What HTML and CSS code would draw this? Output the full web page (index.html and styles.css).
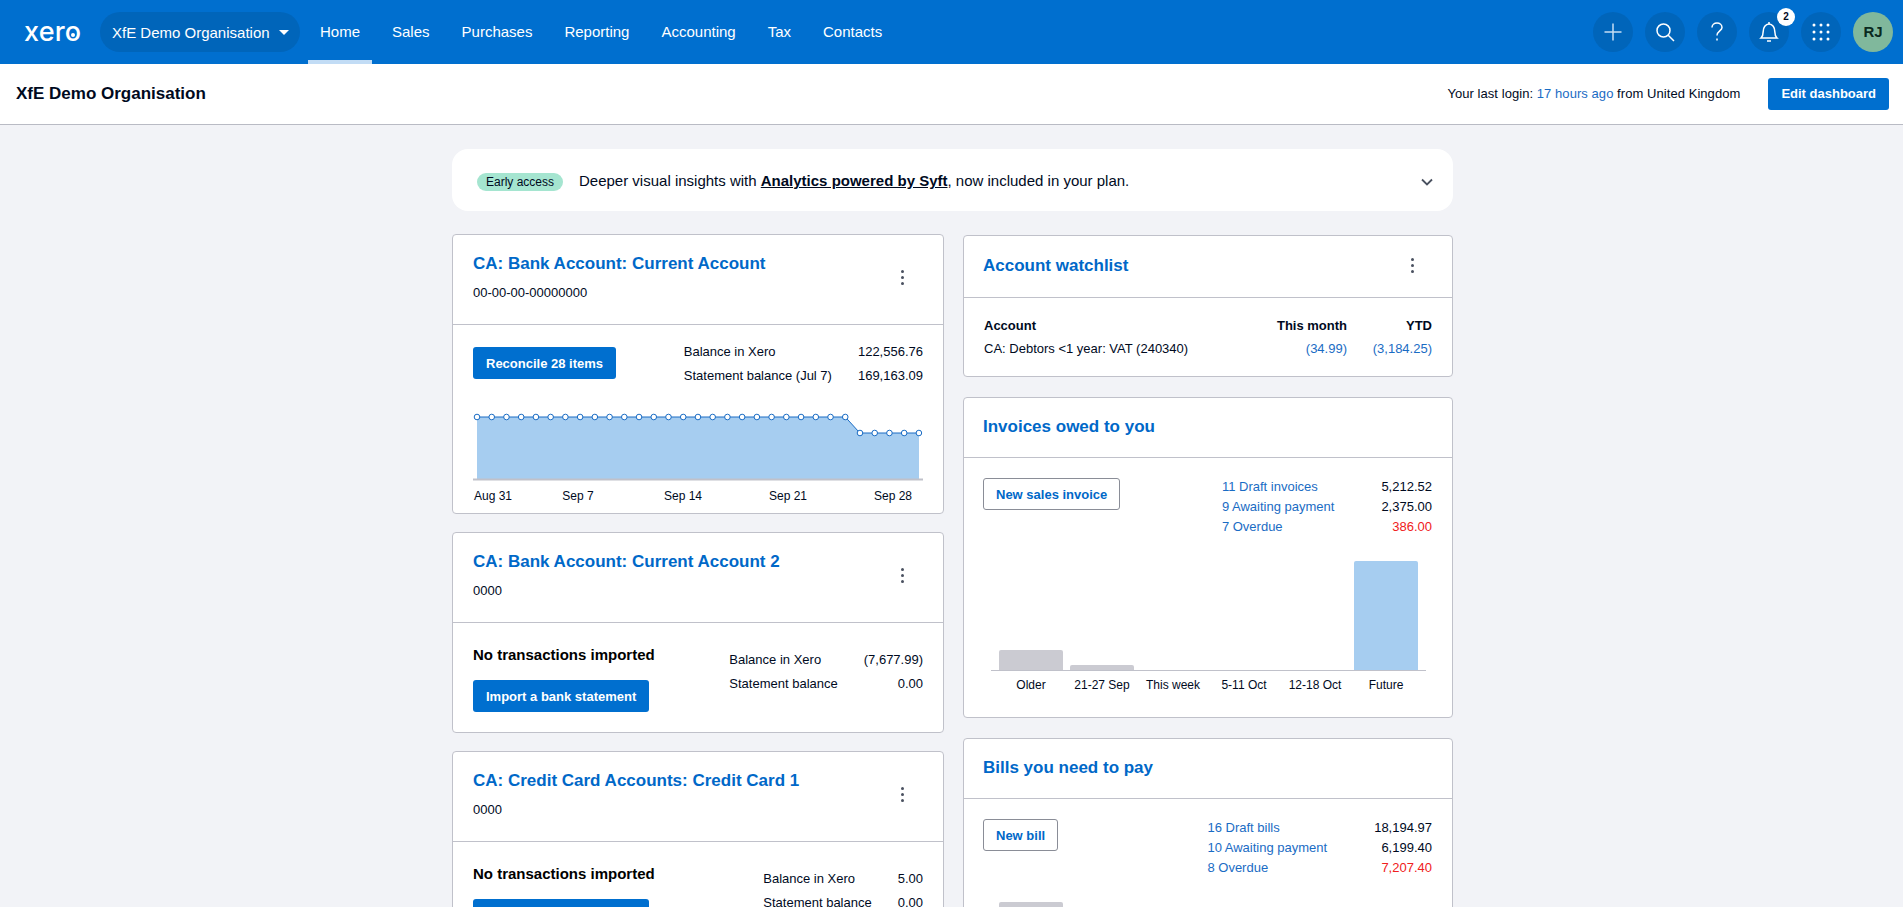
FILE: index.html
```html
<!DOCTYPE html>
<html lang="en">
<head>
<meta charset="utf-8">
<title>Xero Dashboard</title>
<link rel="stylesheet" href="styles.css">
</head>
<body>
<header class="topbar">
  <div class="brand"><a class="logo">xero</a></div>
  <button class="org">XfE Demo Organisation<span class="caret"></span></button>
  <nav class="nav">
    <a class="nav-item active">Home</a>
    <a class="nav-item">Sales</a>
    <a class="nav-item">Purchases</a>
    <a class="nav-item">Reporting</a>
    <a class="nav-item">Accounting</a>
    <a class="nav-item">Tax</a>
    <a class="nav-item">Contacts</a>
  </nav>
  <div class="tools">
    <span class="tool"><svg width="20" height="20" viewBox="0 0 20 20"><path class="plus" d="M10 1.500v17M1.500 10h17"/></svg></span>
    <span class="tool"><svg width="22" height="22" viewBox="0 0 22 22"><circle class="ln" cx="9.500" cy="9.500" r="6.500"/><path class="ln" d="M14.200 14.200l5.800 5.800"/></svg></span>
    <span class="tool"><svg width="14" height="22" viewBox="0 0 14 22"><path class="ln" d="M2 6.500C2 3.800 4.200 2 7 2s5 1.800 5 4.400c0 3.400-5 3.800-5 8.100M7 17.500v2"/></svg></span>
    <span class="tool"><svg width="20" height="22" viewBox="0 0 20 22"><path class="ln" d="M2 17h16c-1.600-1.500-2.200-3-2.200-6.500C15.800 6.500 13.500 3 10 3S4.200 6.500 4.200 10.500C4.200 14 3.600 15.500 2 17z"/><path class="ln" d="M10 1v2M8 20h4"/></svg><span class="badge">2</span></span>
    <span class="tool"><svg width="18" height="18" viewBox="0 0 18 18"><g class="dots"><circle cx="2" cy="2" r="1.500"/><circle cx="9" cy="2" r="1.500"/><circle cx="16" cy="2" r="1.500"/><circle cx="2" cy="9" r="1.500"/><circle cx="9" cy="9" r="1.500"/><circle cx="16" cy="9" r="1.500"/><circle cx="2" cy="16" r="1.500"/><circle cx="9" cy="16" r="1.500"/><circle cx="16" cy="16" r="1.500"/></g></svg></span>
    <span class="avatar">RJ</span>
  </div>
</header>
<div class="subbar">
  <h1 class="page-title">XfE Demo Organisation</h1>
  <div class="sub-right">
    <span class="login">Your last login: <a class="link">17 hours ago</a> from United Kingdom</span>
    <button class="btn primary">Edit dashboard</button>
  </div>
</div>
<main class="main">
  <section class="banner">
    <span class="pill">Early access</span>
    <span class="banner-text">Deeper visual insights with <a class="banner-link">Analytics powered by Syft</a>, now included in your plan.</span>
    <svg class="chev" width="12" height="8" viewBox="0 0 12 8"><path d="M1 1.500l5 5 5-5"/></svg>
  </section>
  <div class="cols">
    <div class="col">
      <article class="card">
        <div class="card-head">
          <div><h2 class="card-title">CA: Bank Account: Current Account</h2><div class="acct">00-00-00-00000000</div></div>
          <span class="kebab"><i></i><i></i><i></i></span>
        </div>
        <div class="bank-body chart-body">
          <div class="bank-row">
            <button class="btn primary top7">Reconcile 28 items</button>
            <div class="stats">
              <span>Balance in Xero</span><span class="num">122,556.76</span>
              <span>Statement balance (Jul 7)</span><span class="num">169,163.09</span>
            </div>
          </div>
          <svg class="line-chart" width="450" height="113" viewBox="0 0 450 113">
            <path class="area" d="M4 17H372.300L386.900 33H446V79H4z"/>
            <path class="axis" d="M0 79.500H450"/>
            <path class="trend" d="M4 17H372.300L386.900 33H446"/>
            <g class="pts" id="pts"></g>
            <text class="tick" x="1" y="100">Aug 31</text>
            <text class="tick mid" x="105" y="100">Sep 7</text>
            <text class="tick mid" x="210" y="100">Sep 14</text>
            <text class="tick mid" x="315" y="100">Sep 21</text>
            <text class="tick mid" x="420" y="100">Sep 28</text>
          </svg>
        </div>
      </article>
      <article class="card">
        <div class="card-head">
          <div><h2 class="card-title">CA: Bank Account: Current Account 2</h2><div class="acct">0000</div></div>
          <span class="kebab"><i></i><i></i><i></i></span>
        </div>
        <div class="bank-body">
          <div class="bank-row">
            <div><div class="none">No transactions imported</div><button class="btn primary top15">Import a bank statement</button></div>
            <div class="stats top3">
              <span>Balance in Xero</span><span class="num">(7,677.99)</span>
              <span>Statement balance</span><span class="num">0.00</span>
            </div>
          </div>
        </div>
      </article>
      <article class="card">
        <div class="card-head">
          <div><h2 class="card-title">CA: Credit Card Accounts: Credit Card 1</h2><div class="acct">0000</div></div>
          <span class="kebab"><i></i><i></i><i></i></span>
        </div>
        <div class="bank-body">
          <div class="bank-row">
            <div><div class="none">No transactions imported</div><button class="btn primary top15">Import a bank statement</button></div>
            <div class="stats top3">
              <span>Balance in Xero</span><span class="num">5.00</span>
              <span>Statement balance</span><span class="num">0.00</span>
            </div>
          </div>
        </div>
      </article>
    </div>
    <div class="col col-right">
      <article class="card">
        <div class="single-head watch-head">
          <h2 class="card-title">Account watchlist</h2>
          <span class="kebab"><i></i><i></i><i></i></span>
        </div>
        <div class="watch-body">
          <div class="watch">
            <b>Account</b><b class="num">This month</b><b class="num">YTD</b>
            <span>CA: Debtors &lt;1 year: VAT (240340)</span><a class="num link">(34.99)</a><a class="num link">(3,184.25)</a>
          </div>
        </div>
      </article>
      <article class="card">
        <div class="single-head"><h2 class="card-title">Invoices owed to you</h2></div>
        <div class="money-body">
          <div class="bank-row">
            <button class="btn outline">New sales invoice</button>
            <div class="money">
              <a class="link">11 Draft invoices</a><span class="num">5,212.52</span>
              <a class="link">9 Awaiting payment</a><span class="num">2,375.00</span>
              <a class="link">7 Overdue</a><span class="num red">386.00</span>
            </div>
          </div>
          <div class="plot">
            <span class="bar grey" style="height:20px"></span>
            <span class="bar grey" style="height:5px"></span>
            <span class="bar" style="height:0"></span>
            <span class="bar" style="height:0"></span>
            <span class="bar" style="height:0"></span>
            <span class="bar blue" style="height:109px"></span>
          </div>
          <div class="plot-labels"><span>Older</span><span>21-27 Sep</span><span>This week</span><span>5-11 Oct</span><span>12-18 Oct</span><span>Future</span></div>
        </div>
      </article>
      <article class="card">
        <div class="single-head"><h2 class="card-title">Bills you need to pay</h2></div>
        <div class="money-body">
          <div class="bank-row">
            <button class="btn outline">New bill</button>
            <div class="money">
              <a class="link">16 Draft bills</a><span class="num">18,194.97</span>
              <a class="link">10 Awaiting payment</a><span class="num">6,199.40</span>
              <a class="link">8 Overdue</a><span class="num red">7,207.40</span>
            </div>
          </div>
          <div class="plot">
            <span class="bar grey" style="height:109px"></span>
            <span class="bar" style="height:0"></span>
            <span class="bar" style="height:0"></span>
            <span class="bar" style="height:0"></span>
            <span class="bar" style="height:0"></span>
            <span class="bar" style="height:0"></span>
          </div>
        </div>
      </article>
    </div>
  </div>
</main>
<script src="chart.js"></script>
</body>
</html>
```

FILE: chart.js
```js
var g = document.getElementById('pts');
var out = '';
for (var i = 0; i < 31; i++) {
  var x = 4 + i * 14.73;
  var y = i < 26 ? 17 : 33;
  out += '<circle cx="' + x.toFixed(2) + '" cy="' + y + '" r="2.800"/>';
}
g.innerHTML = out;
```

FILE: styles.css
```css
* { box-sizing: border-box; }
html, body { margin: 0; height: 907px; overflow: hidden; }
body { background: #f2f3f7; color: #000a1e; font: 13px/20px "Liberation Sans", Arial, sans-serif; }
h1, h2 { margin: 0; }
button { font-family: inherit; cursor: pointer; }

.topbar { display: flex; align-items: center; height: 64px; background: #006fcf; padding: 0 10px 0 24px; color: #fff; }
.brand { flex: none; width: 76px; height: 30px; }
.logo { position: relative; display: inline-block; font: 500 27px/30px Inter, sans-serif; letter-spacing: .2px; color: #fff; }
.logo::after { content: ""; position: absolute; right: 6px; top: 16px; width: 4px; height: 4px; border-radius: 50%; background: #fff; }
.org { display: flex; align-items: center; flex: none; height: 40px; width: 200px; padding: 0 0 0 12px; border: 0; border-radius: 20px; background: #0065ba; color: #fff; font-size: 15px; }
.caret { margin-left: 9px; border: 5px solid transparent; border-top: 5px solid #fff; border-bottom: 0; }
.nav { display: flex; gap: 8px; margin-left: 8px; height: 64px; }
.nav-item { display: flex; align-items: center; padding: 0 12px; font-size: 15px; border-bottom: 4px solid transparent; border-top: 4px solid transparent; }
.nav-item.active { border-bottom-color: #c2dcf5; }
.tools { display: flex; gap: 12px; margin-left: auto; }
.tool { position: relative; display: flex; align-items: center; justify-content: center; width: 40px; height: 40px; border-radius: 50%; background: #0065ba; }
.ln { fill: none; stroke: #fff; stroke-width: 1.500; }
.plus { fill: none; stroke: #c5ddf3; stroke-width: 1.500; }
.dots { fill: #fff; }
.badge { position: absolute; left: 28px; top: -4px; width: 18px; height: 18px; border-radius: 50%; background: #fff; color: #000a1e; font-size: 10px; font-weight: 700; line-height: 18px; text-align: center; }
.avatar { display: flex; align-items: center; justify-content: center; width: 40px; height: 40px; border-radius: 50%; background: #80b89c; color: #0a2a20; font-size: 15px; font-weight: 700; }

.subbar { display: flex; align-items: center; justify-content: space-between; height: 61px; padding: 0 14px 1px 16px; background: #fff; border-bottom: 1px solid #b9bbc4; }
.page-title { font-size: 17px; line-height: 24px; color: #000a1e; }
.sub-right { display: flex; align-items: center; gap: 28px; }
.login { font-size: 13px; letter-spacing: .06px; }
.link { color: #1a6cc4; }
.btn { display: block; height: 32px; padding: 0 13px; border-radius: 3px; font-size: 13px; font-weight: 700; white-space: nowrap; }
.primary { border: 0; background: #006fcf; color: #fff; }
.outline { border: 1px solid #8a8d97; background: #fff; color: #0068c8; padding: 0 12px; }
.top7 { margin-top: 7px; padding: 0 13px; }
.top15 { margin-top: 15px; }
.top3 { margin-top: 3px; }

.main { width: 1003px; margin: 0 auto; padding: 24px 0 0 2px; }
.banner { display: flex; align-items: center; height: 62px; margin-bottom: 23px; padding: 4px 20px 0 25px; border-radius: 16px; background: #fff; }
.pill { width: 86px; height: 18px; border-radius: 9px; background: #a5e5d0; font-size: 12px; line-height: 18px; text-align: center; }
.banner-text { margin: -2px 0 0 16px; font-size: 15px; }
.banner-link { font-weight: 700; text-decoration: underline; }
.chev { margin-left: auto; }
.chev path { fill: none; stroke: #4a5160; stroke-width: 1.800; }

.cols { display: grid; grid-template-columns: 492px 490px; column-gap: 19px; }
.col { display: flex; flex-direction: column; gap: 18px; }
.col-right { gap: 20px; padding-top: 1px; }
.card { background: #fff; border: 1px solid #c0c1ca; border-radius: 4px; }
.card-head { display: flex; align-items: center; justify-content: space-between; padding: 17px 21px 21px 20px; border-bottom: 1px solid #c0c1ca; height: 90px; }
.card-title { font-size: 17px; line-height: 24px; color: #0068c8; font-weight: 700; }
.acct { margin-top: 7px; line-height: 20px; }
.kebab { display: flex; flex-direction: column; align-items: center; justify-content: center; gap: 3px; width: 40px; height: 40px; }
.kebab i { width: 3px; height: 3px; border-radius: 50%; background: #4a5160; }
.bank-body { padding: 22px 20px 20px; }
.chart-body { padding: 15px 20px 0; height: 188px; }
.bank-row { display: flex; align-items: flex-start; justify-content: space-between; }
.stats { display: grid; grid-template-columns: auto auto; column-gap: 26px; line-height: 24px; }
.num { text-align: right; }
.none { font-size: 15px; font-weight: 700; line-height: 20px; color: #000; }
.line-chart { display: block; margin-top: 12px; }
.area { fill: #a6cdf0; }
.axis { stroke: #c0c1ca; stroke-width: 2; fill: none; }
.trend { fill: none; stroke: #1a6cc4; stroke-width: 1; }
.pts circle { fill: #fff; stroke: #1a6cc4; stroke-width: 1; }
.tick { font: 12px "Liberation Sans", Arial, sans-serif; fill: #000a1e; }
.mid { text-anchor: middle; }

.single-head { display: flex; align-items: center; justify-content: space-between; height: 60px; padding: 0 20px 2px 19px; border-bottom: 1px solid #c0c1ca; }
.watch-head { height: 62px; padding-bottom: 2px; }
.watch-body { padding: 18px 20px 17px 20px; }
.watch { display: grid; grid-template-columns: 1fr auto 85px; row-gap: 3px; }
.money-body { padding: 20px 20px 0 19px; height: 259px; }
.money { display: grid; grid-template-columns: auto auto; column-gap: 47px; margin-top: -1px; }
.red { color: #f02020; }
.plot { display: grid; grid-template-columns: repeat(6, 71px); align-items: end; justify-content: center; height: 134px; margin: 0 6px 0 8px; border-bottom: 1px solid #c0c1ca; }
.bar { justify-self: center; width: 64px; border-radius: 2px 2px 0 0; }
.grey { background: #cbcbd2; }
.blue { background: #a6cdf0; }
.plot-labels { display: grid; grid-template-columns: repeat(6, 71px); justify-content: center; margin: 6px 6px 0 8px; font-size: 12px; line-height: 16px; text-align: center; }
```
